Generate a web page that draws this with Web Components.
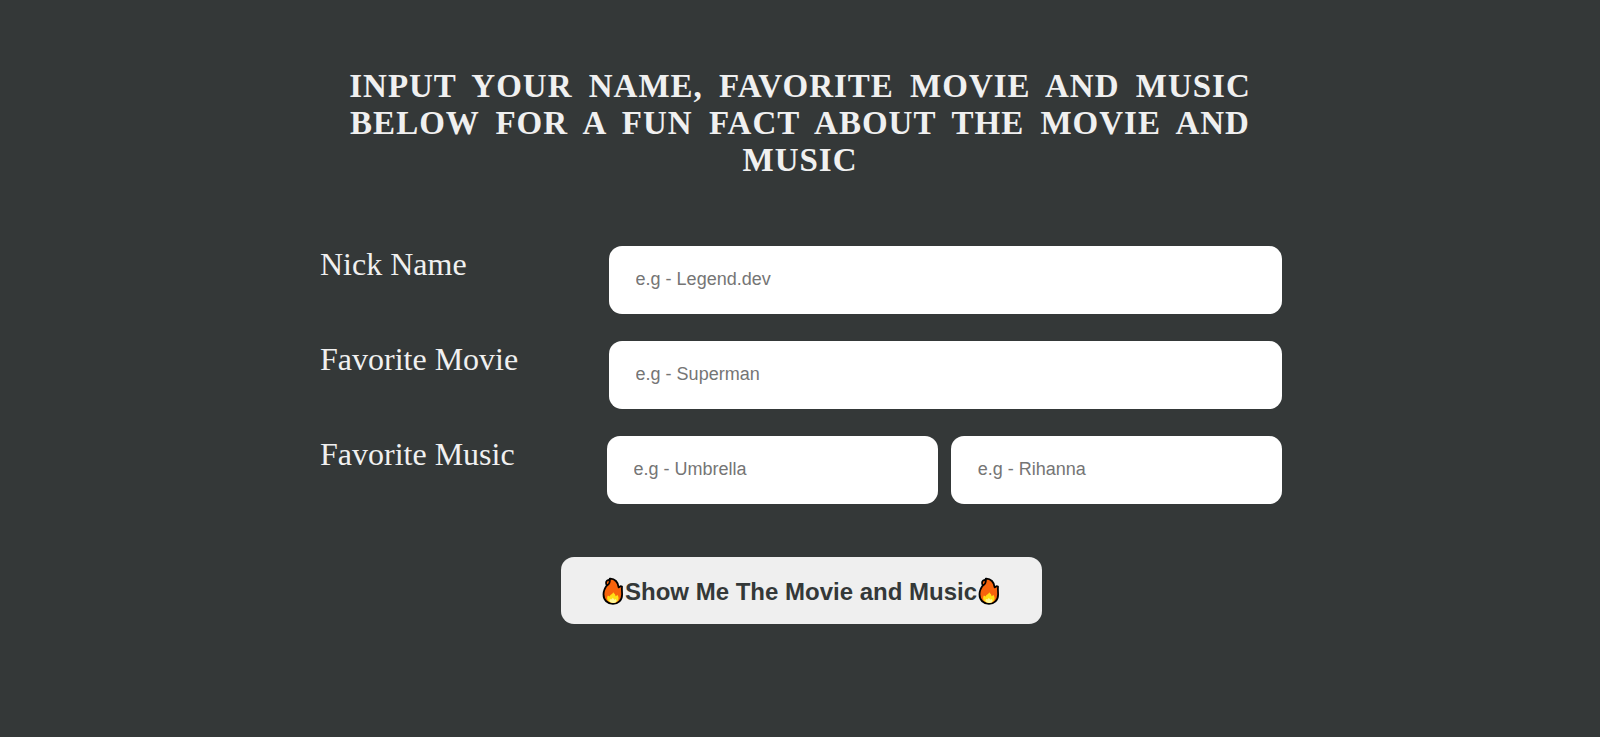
<!DOCTYPE html>
<html lang="en">
<head>
<meta charset="utf-8">
<title>Movie and Music Fun Facts</title>
<style>
  html { background: #343838; }
  body {
    margin: 0;
    color: #f0f0f0;
    font-family: "Liberation Serif", "Times New Roman", serif;
  }
</style>
</head>
<body>
<fun-fact-form>
  <span slot="title">Input your name, favorite movie and music below for a fun fact about the movie and music</span>
  <form-row label="Nick Name" placeholders="e.g - Legend.dev"></form-row>
  <form-row label="Favorite Movie" placeholders="e.g - Superman"></form-row>
  <form-row label="Favorite Music" placeholders="e.g - Umbrella|e.g - Rihanna"></form-row>
  <fire-button slot="action">Show Me The Movie and Music</fire-button>
</fun-fact-form>

<template id="form-template">
  <style>
    :host { display: block; width: 60%; margin: 0 auto; padding: 68px 0; }
    h1 {
      margin: 0 0 67px;
      padding: 0 24px;
      font-size: 33px;
      line-height: 37px;
      font-weight: bold;
      text-align: center;
      text-transform: uppercase;
      letter-spacing: 1px;
      word-spacing: 7px;
    }
    form { margin: 0 -2px 0 0; }
    .rows { display: flex; flex-direction: column; gap: 27px; }
    .action { display: flex; justify-content: center; margin-top: 53px; }
  </style>
  <h1><slot name="title"></slot></h1>
  <form>
    <div class="rows"><slot></slot></div>
    <div class="action"><slot name="action"></slot></div>
  </form>
</template>

<template id="row-template">
  <style>
    :host { display: grid; grid-template-columns: 3fr 7fr; }
    :host([double]) .inputs { margin-left: -2px; }
    label { font-size: 32px; line-height: 37px; }
    .inputs { display: flex; gap: 13px; min-width: 0; }
    input {
      box-sizing: border-box;
      flex: 1 1 0;
      min-width: 0;
      height: 68px;
      margin: 0;
      padding: 0 27px 2px;
      border: 0;
      border-radius: 13px;
      background: #fff;
      color: #343838;
      font: 18px "Liberation Sans", Arial, sans-serif;
    }
    input::placeholder { color: #757575; opacity: 1; }
  </style>
  <label for="field-0"></label>
  <div class="inputs"></div>
</template>

<template id="button-template">
  <style>
    :host { display: block; width: 50%; }
    button {
      display: flex;
      align-items: center;
      justify-content: center;
      box-sizing: border-box;
      width: 100%;
      height: 67px;
      padding: 2px 0 0;
      border: 0;
      border-radius: 13px;
      background: #efefef;
      color: #343838;
      font: bold 24px "Liberation Sans", Arial, sans-serif;
      white-space: nowrap;
      cursor: pointer;
    }
  </style>
  <button type="button">
    <flame-icon></flame-icon><span><slot></slot></span><flame-icon></flame-icon>
  </button>
</template>

<template id="flame-template">
  <style>
    :host { display: block; flex: none; width: 24px; height: 28px; }
    svg { display: block; overflow: visible; }
  </style>
  <svg width="24" height="28" viewBox="1 1 24 28" aria-hidden="true">
    <path d="M9.8 1.6C14.6 1.2 18.4 5.5 18.6 10.3C19.4 10 20 9.6 20.6 9.2L22 9.6C21.7 12.3 22.1 14.3 22.1 17.5C22.1 23.4 18.2 26.8 13 26.8C7.5 26.8 3.5 23.2 3.5 17.3C3.5 12.8 5.4 10.2 7.4 7.5C8.6 5.8 9.8 3.5 9.8 1.6Z" fill="#f7630c" stroke="#000" stroke-width="1.8" stroke-linejoin="round"/>
    <path d="M9.8 2.8C7.4 2.7 6 4.2 6 6C6 7.2 6.4 8.1 7.3 8.4C9 7 10.1 5 9.8 2.8Z" fill="#f7630c" stroke="#000" stroke-width="1.7"/>
    <path d="M13.2 15.2C14 17 15.8 17 15.5 19.2C16.5 19 17 18.4 17.4 17.8C20.4 22.4 17.3 25.8 13 25.8C8 25.8 5.8 22.2 7.9 18.6C8.5 19.1 9 19.4 9.7 19.5C9.6 17.8 12.4 17.5 13.2 15.2Z" fill="#ffdf16"/>
    <path d="M12.8 20.8C13.2 21.6 14.2 21.7 14.2 22.8C15 22.7 15.5 22.4 15.8 21.9C17.8 24.4 15.6 25.9 13 25.9C10.3 25.9 8.7 24.2 10 22C11.5 22.8 12.3 22 12.8 20.8Z" fill="#fff79a"/>
  </svg>
</template>

<script>
  const stamp = (host, id) => {
    const root = host.attachShadow({ mode: "open" });
    root.append(document.getElementById(id).content.cloneNode(true));
    return root;
  };

  customElements.define("fun-fact-form", class extends HTMLElement {
    constructor() { super(); stamp(this, "form-template"); }
  });

  customElements.define("form-row", class extends HTMLElement {
    constructor() { super(); stamp(this, "row-template"); }
    connectedCallback() {
      const label = this.getAttribute("label");
      const hints = this.getAttribute("placeholders").split("|");
      this.shadowRoot.querySelector("label").textContent = label;
      this.toggleAttribute("double", hints.length > 1);
      this.shadowRoot.querySelector(".inputs").replaceChildren(...hints.map((hint, i) => {
        const input = document.createElement("input");
        input.type = "text";
        input.id = "field-" + i;
        input.placeholder = hint;
        if (i > 0) input.setAttribute("aria-label", label + " artist");
        return input;
      }));
    }
  });

  customElements.define("flame-icon", class extends HTMLElement {
    constructor() { super(); stamp(this, "flame-template"); }
  });

  customElements.define("fire-button", class extends HTMLElement {
    constructor() { super(); stamp(this, "button-template"); }
  });
</script>
</body>
</html>
